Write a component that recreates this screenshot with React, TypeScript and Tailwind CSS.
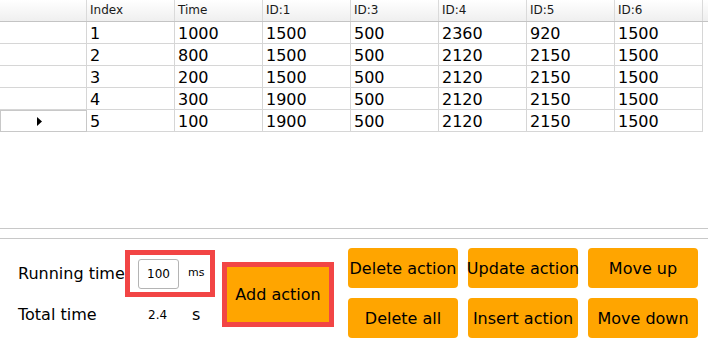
import React from 'react';

const columns = ['Index', 'Time', 'ID:1', 'ID:3', 'ID:4', 'ID:5', 'ID:6'];

const rows = [
  ['1', '1000', '1500', '500', '2360', '920', '1500'],
  ['2', '800', '1500', '500', '2120', '2150', '1500'],
  ['3', '200', '1500', '500', '2120', '2150', '1500'],
  ['4', '300', '1900', '500', '2120', '2150', '1500'],
  ['5', '100', '1900', '500', '2120', '2150', '1500'],
];

const buttons = ['Delete action', 'Update action', 'Move up', 'Delete all', 'Insert action', 'Move down'];

const App: React.FC = () => {
  return (
    <div className="w-[708px] h-[348px] bg-white text-black overflow-hidden font-['DejaVu_Sans',sans-serif]">
      {/* table */}
      <div className="h-[229px] border-b border-[#c8c8c8]">
        <div className="flex h-[22px] border-b border-[#c4c4c4] bg-gradient-to-b from-white to-[#efefef]">
          <div className="w-[87px] border-r border-[#dadada]" />
          {columns.map((c) => (
            <div key={c} className="w-[88px] border-r border-[#dadada] pl-[3px] text-[12px] leading-[20px] text-[#1a1a1a]">
              {c}
            </div>
          ))}
          <div className="flex-1" />
        </div>
        {rows.map((r, i) => (
          <div key={i} className="flex h-[22px]">
            <div
              className={
                i === rows.length - 1
                  ? 'w-[87px] border border-[#c8c8c8] flex items-center justify-center'
                  : 'w-[87px] border-r border-b border-[#d6d6d6]'
              }
            >
              {i === rows.length - 1 && (
                <svg width="6" height="9" viewBox="0 0 6 9" className="mr-[7px]">
                  <polygon points="0,0 5,4.5 0,9" fill="#000" />
                </svg>
              )}
            </div>
            {r.map((v, j) => (
              <div key={j} className="w-[88px] overflow-hidden border-r border-b border-[#d6d6d6] pl-[3px] text-[16px] leading-[23px]">
                {v}
              </div>
            ))}
          </div>
        ))}
      </div>

      <div className="mt-[9px] border-t border-[#c8c8c8]" />

      {/* controls */}
      <div className="flex items-start">
        <div className="mt-[11px] flex flex-col">
          <div className="flex h-[47px] items-center">
            <span className="w-[125px] pl-[18px] text-[16px]">Running time</span>
            <div className="flex h-[47px] w-[90px] items-center border-[5px] border-[#f24545] pl-[8px]">
              <div className="flex h-[30px] w-[41px] items-center justify-center rounded-[3px] border border-[#b4b4b4] text-[12px]">
                100
              </div>
              <span className="ml-[9px] text-[11px]">ms</span>
            </div>
          </div>
          <div className="mt-[3px] flex h-[30px] items-center">
            <span className="w-[148px] pl-[18px] text-[16px]">Total time</span>
            <span className="w-[44px] text-[12px]">2.4</span>
            <span className="text-[16px]">s</span>
          </div>
        </div>

        <div className="ml-[7px] mt-[23px] flex h-[65px] w-[112px] items-center justify-center border-[5px] border-[#f24545] bg-[#ffa500] text-[16px]">
          Add action
        </div>

        <div className="ml-[14px] mt-[9px] grid grid-cols-[110px_110px_110px] gap-x-[10px] gap-y-[10px]">
          {buttons.map((b) => (
            <div
              key={b}
              className="flex h-[40px] items-center justify-center whitespace-nowrap rounded-[4px] bg-[#ffa500] pt-[2px] text-[16px]"
            >
              {b}
            </div>
          ))}
        </div>
      </div>
    </div>
  );
};

export default App;
